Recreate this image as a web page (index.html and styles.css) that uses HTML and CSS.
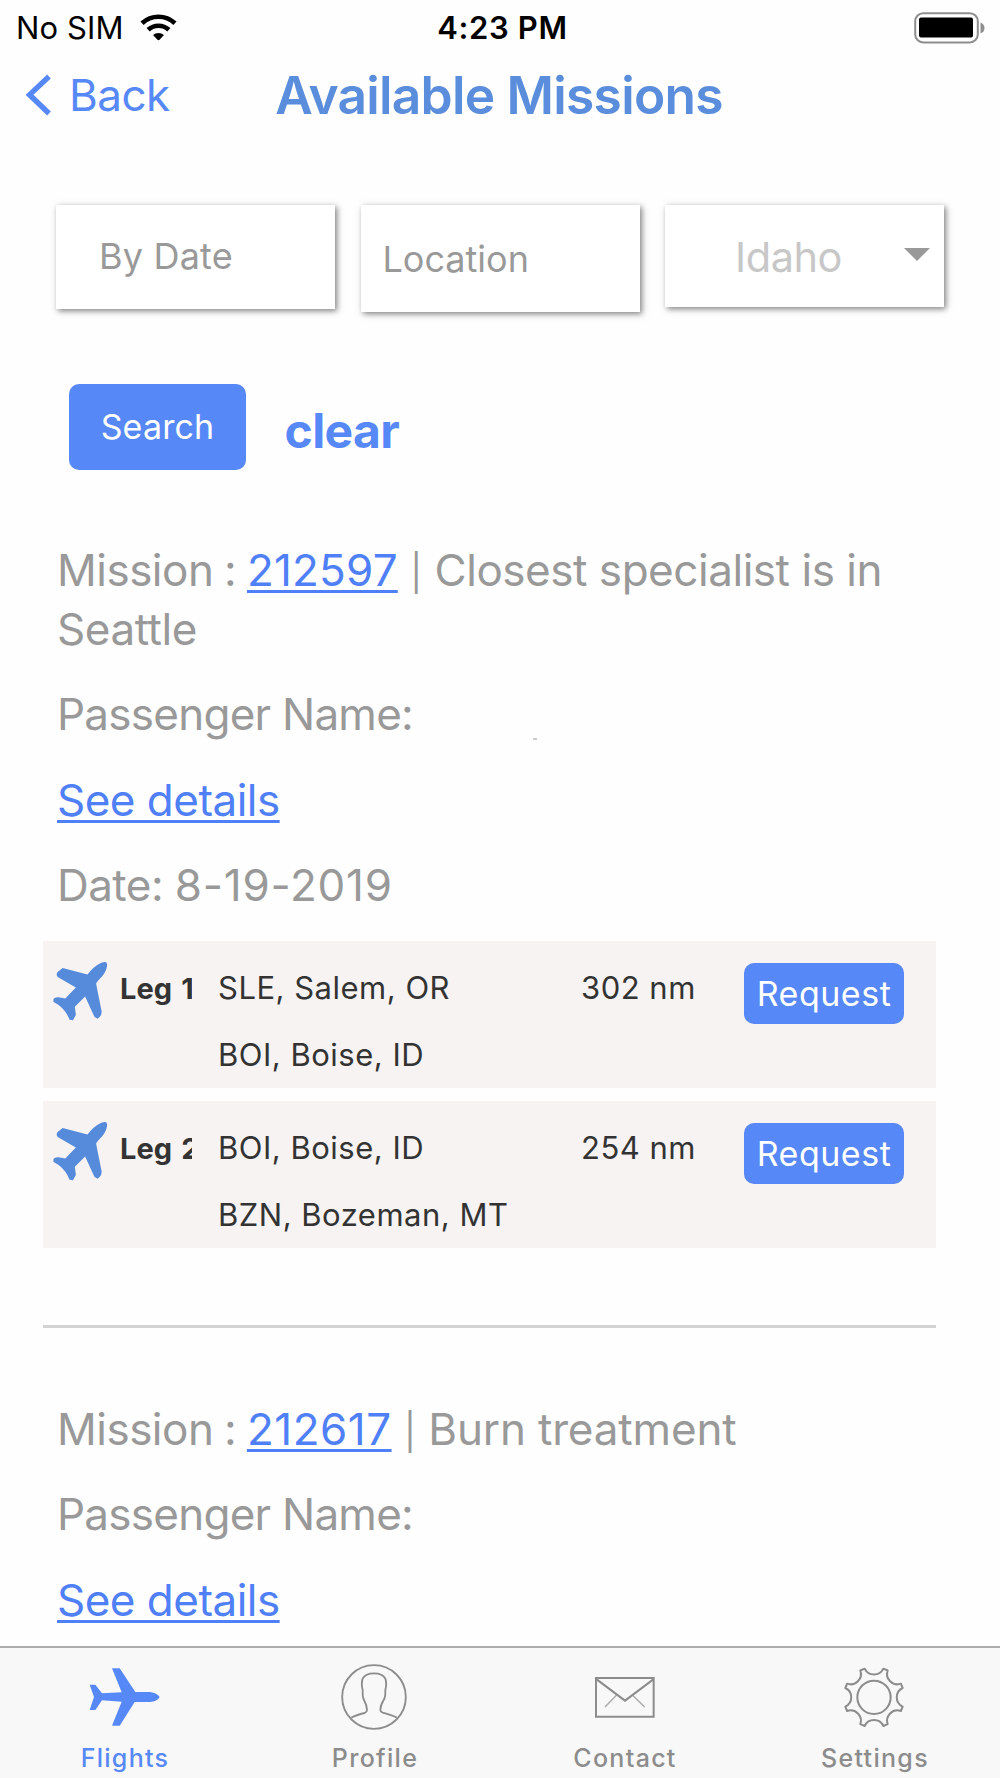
FILE: index.html
```html
<!DOCTYPE html>
<html lang="en">
<head>
<meta charset="utf-8">
<title>Available Missions</title>
<link rel="stylesheet" href="styles.css">
</head>
<body>
<div class="screen">
  <header class="status">
    <div class="status-left">
      <span class="carrier">No SIM</span>
      <svg class="wifi" viewBox="420 41 112 81"><g fill="none" stroke="#000" stroke-width="14"><path d="M426.2 68.6A73 73 0 0 1 525.8 68.6"/><path d="M444.6 88.4A46 46 0 0 1 507.4 88.4"/></g><path d="M459.6 104.4A24 24 0 0 1 492.4 104.4L480 118Q476 122 472 118Z"/></svg>
    </div>
    <span class="clock">4:23 PM</span>
    <svg class="battery" viewBox="0 0 72 32"><rect x="1.2" y="1.2" width="62.6" height="29.2" rx="8" fill="#fff" stroke="#8e8e8e" stroke-width="2"/><rect x="5" y="5.5" width="54" height="20" rx="2"/><path d="M66.5 10.5Q70.500 12 70.500 16T66.500 21.500Z" fill="#8e8e8e"/></svg>
  </header>
  <nav class="nav">
    <a class="back"><svg class="chevron" viewBox="0 0 26 42"><path d="M23 2.500 3.500 20.800 23 39.500" fill="none" stroke="currentColor" stroke-width="5.400"/></svg><span>Back</span></a>
    <h1 class="title">Available Missions</h1>
  </nav>
  <main class="content">
    <div class="filters">
      <div class="field field-date">By Date</div>
      <div class="field field-location">Location</div>
      <div class="field field-state"><span class="state">Idaho</span><svg class="caret" viewBox="0 0 26 13"><path d="M0 0H26L13 13Z" fill="#999"/></svg></div>
    </div>
    <div class="actions">
      <button class="btn search">Search</button>
      <a class="clear">clear</a>
    </div>
    <section class="mission">
      <p><span class="label">Mission : </span><a class="link num">212597</a> <span class="bar">|</span> <span class="reason-long">Closest specialist is in Seattle</span></p>
      <p class="passenger">Passenger Name:<span class="tick"></span></p>
      <p><a class="link see">See details</a></p>
      <p><span class="date-label">Date: </span><span class="date">8-19-2019</span></p>
      <div class="legs">
        <div class="leg">
          <svg class="plane" viewBox="68 95 163 178"><path d="M214 97Q231 92 231 100V108Q228 130 203 152L198 160 215 245Q215 255 208 262L202 266 193 260 165 199 134 230 137 255 128 271 118 269Q108 243 85 225L69 215 70 205 77 202 84 201 105 205 137 172 82 140Q76 132 82 125L97 113 172 133Q190 108 214 97Z" fill="#568bdc"/></svg>
          <b class="leg-name">Leg 1</b>
          <div class="route"><span>SLE, Salem, OR</span><span>BOI, Boise, ID</span></div>
          <span class="dist">302 nm</span>
          <button class="btn request">Request</button>
        </div>
        <div class="leg">
          <svg class="plane" viewBox="68 95 163 178"><path d="M214 97Q231 92 231 100V108Q228 130 203 152L198 160 215 245Q215 255 208 262L202 266 193 260 165 199 134 230 137 255 128 271 118 269Q108 243 85 225L69 215 70 205 77 202 84 201 105 205 137 172 82 140Q76 132 82 125L97 113 172 133Q190 108 214 97Z" fill="#568bdc"/></svg>
          <b class="leg-name">Leg 2</b>
          <div class="route"><span>BOI, Boise, ID</span><span>BZN, Bozeman, MT</span></div>
          <span class="dist">254 nm</span>
          <button class="btn request">Request</button>
        </div>
      </div>
    </section>
    <hr class="divider">
    <section class="mission">
      <p><span class="label">Mission : </span><a class="link num-wide">212617</a> <span class="bar">|</span> <span class="reason">Burn treatment</span></p>
      <p class="passenger">Passenger Name:</p>
      <p><a class="link see">See details</a></p>
    </section>
  </main>
  <footer class="tabs">
    <a class="tab active"><svg class="tab-icon" viewBox="255 96 240 210"><path d="M336 115H359L406 186H450Q472 189 479 201Q472 214 450 216H404L359 287H336L365 215 306 211 286 240H269L282 201 269 164H286L306 190 365 187Z" fill="currentColor"/></svg><span>Flights</span></a>
    <a class="tab"><svg class="tab-icon" viewBox="1005 96 240 210"><g fill="none" stroke="currentColor" stroke-width="5.500"><circle cx="1122" cy="201" r="95.500"/><path d="M1054 263Q1068 255 1094 249Q1101 246 1101 240Q1101 226 1092 210Q1087 201 1088 180Q1083 160 1088 146Q1096 130 1122 130Q1148 130 1156 146Q1161 160 1156 180Q1157 201 1151 210Q1141 226 1141 240Q1142 246 1148 248Q1176 255 1190 263"/></g></svg><span>Profile</span></a>
    <a class="tab"><svg class="tab-icon" viewBox="255 96 240 210"><g fill="none" stroke="currentColor"><path stroke-width="6" d="M288 144H461V260H288Z"/><path stroke-width="6" d="M290 148 375 212 460 148"/><path stroke-width="4" opacity=".75" d="M350 195 315 231M397 195 434 231"/></g></svg><span>Contact</span></a>
    <a class="tab"><svg class="tab-icon" viewBox="-117 -106 240 210"><g fill="none" stroke="currentColor" stroke-width="6"><circle r="50"/><path stroke-linejoin="round" d="M-28 -86A31 31 0 0 0 28 -86L41 -80.600A31 31 0 0 0 80.600 -41L86 -28A31 31 0 0 0 86 28L80.600 41A31 31 0 0 0 41 80.600L28 86A31 31 0 0 0 -28 86L-41 80.600A31 31 0 0 0 -80.600 41L-86 28A31 31 0 0 0 -86 -28L-80.600 -41A31 31 0 0 0 -41 -80.600Z"/></g></svg><span>Settings</span></a>
  </footer>
</div>
</body>
</html>
```
FILE: styles.css
```css
* { box-sizing: border-box; }
body { margin: 0; background: #fff; font-family: Inter, "Liberation Sans", sans-serif; }
svg { display: block; flex: none; }
.screen { width: 1000px; height: 1778px; display: flex; flex-direction: column; overflow: hidden; background: #fefefe; }

.status { height: 55px; display: grid; grid-template-columns: 1fr auto 1fr; align-items: center; padding: 0 14px 0 16px; font-size: 31px; color: #000; }
.status-left { display: flex; align-items: center; gap: 17px; }
.carrier { letter-spacing: .1px; }
.wifi { width: 37px; height: 27px; }
.clock { font-weight: 600; letter-spacing: .65px; white-space: nowrap; padding-left: 3px; }
.battery { width: 72px; height: 32px; justify-self: end; }

.nav { height: 80px; display: grid; grid-template-columns: 1fr auto 1fr; align-items: center; padding: 0 28px 0 26px; }
.back { display: flex; align-items: center; gap: 17px; font-size: 44px; letter-spacing: -.55px; color: #5788f7; }
.chevron { width: 26px; height: 42px; }
.title { margin: 0; font-size: 51.5px; font-weight: 600; letter-spacing: -.75px; color: #5a8ddb; white-space: nowrap; }

.content { flex: 1; min-height: 0; overflow: hidden; padding-top: 70px; }
.filters { display: flex; align-items: flex-start; gap: 25.5px; padding-left: 56px; }
.field { width: 279px; background: #fff; box-shadow: 2px 2px 6px rgba(0, 0, 0, .5); display: flex; align-items: center; font-size: 36px; color: #999; }
.field-date { height: 104px; padding: 0 0 2px 43px; letter-spacing: .2px; }
.field-location { height: 107px; padding-left: 22px; }
.field-state { height: 102px; padding: 0 14px 0 70px; justify-content: space-between; color: #c7c7c7; font-size: 41.5px; letter-spacing: -.45px; }
.state { padding-top: 2px; }
.caret { width: 26px; height: 13px; margin-bottom: 3px; }

.actions { display: flex; align-items: center; gap: 38.5px; margin-top: 72px; padding-left: 69px; height: 86px; }
.btn { border: 0; padding: 0; background: #5788f7; color: #fff; font-family: inherit; border-radius: 10px; }
.search { width: 177px; height: 86px; padding-bottom: 2px; font-size: 34px; letter-spacing: .15px; }
.clear { font-size: 48px; font-weight: 700; letter-spacing: -.6px; color: #5788f7; padding-top: 6px; }

.mission { padding: 0 43px; font-size: 44px; line-height: 58.7px; color: #999; }
.actions + .mission { margin-top: 71.3px; }
.mission p { margin: 0 14px 26.6px; }
.label { letter-spacing: -.5px; word-spacing: -1.2px; }
.link { color: #4f80f7; text-decoration: underline; text-decoration-thickness: 3px; text-underline-offset: 3.5px; }
.num { letter-spacing: .2px; }
.num-wide { letter-spacing: .5px; }
.see { letter-spacing: -.52px; }
.bar { font-size: 36px; line-height: 1; }
.reason-long { letter-spacing: -.46px; }
.reason { letter-spacing: -.16px; }
.passenger { letter-spacing: -.75px; }
.date-label { letter-spacing: -.55px; }
.date { letter-spacing: .75px; }
.tick { display: inline-block; width: 4px; height: 2px; margin-left: 120px; background: #ccc; vertical-align: -10px; }

.legs { display: grid; gap: 13px; width: 893px; }
.leg { height: 147px; display: grid; grid-template-columns: 54px 76px 398px 163px 160px; align-items: start; padding-left: 10px; background: #f6f3f2; color: #333; font-size: 31px; line-height: 66.5px; letter-spacing: .5px; }
.plane { width: 54px; height: 59px; margin-top: 21px; }
.leg-name { margin-left: 13px; padding-top: 15px; font-size: 29px; font-weight: 700; letter-spacing: 0; word-spacing: 2.5px; white-space: nowrap; overflow: hidden; width: 72px; }
.route { display: flex; flex-direction: column; padding: 14px 0 0 35px; }
.dist { padding-top: 14px; }
.request { height: 61px; margin-top: 22px; font-size: 34px; letter-spacing: .5px; }
.divider { height: 3px; margin: 77px 64px 72px 43px; border: 0; background: #d3d3d3; }

.tabs { height: 132px; flex: none; display: grid; grid-template-columns: repeat(4, 250px); border-top: 2px solid #acacac; background: #f8f8f8; }
.tab { display: flex; flex-direction: column; align-items: center; color: #8c8c8c; font-size: 25px; font-weight: 500; line-height: 30px; letter-spacing: 1.3px; }
.tab-icon { width: 80px; height: 70px; margin-top: 14px; margin-bottom: 11px; }
.active { color: #5788f7; }
```
